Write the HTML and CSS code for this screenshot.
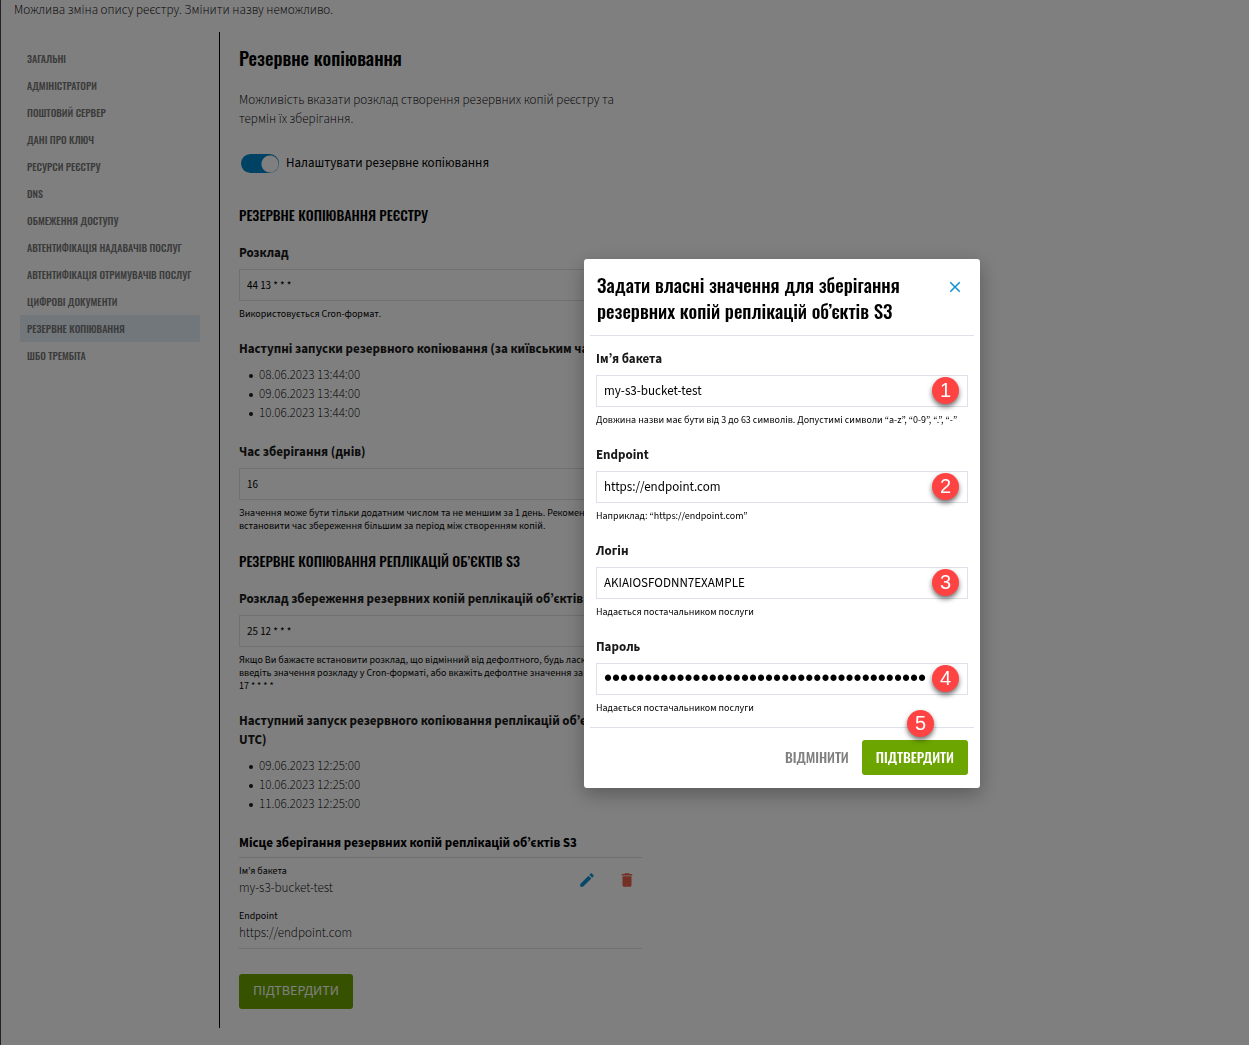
FILE: index.html
```
<!DOCTYPE html>
<html lang="uk">
<head>
<meta charset="utf-8">
<title>Резервне копіювання</title>
<link rel="stylesheet" href="styles.css">
</head>
<body>
<div class="page">
  <p class="intro">Можлива зміна опису реєстру. Змінити назву неможливо.</p>
  <div class="layout">
    <nav class="nav">
      <a href="#">Загальні</a>
      <a href="#">Адміністратори</a>
      <a href="#">Поштовий сервер</a>
      <a href="#">Дані про ключ</a>
      <a href="#">Ресурси реєстру</a>
      <a href="#">DNS</a>
      <a href="#">Обмеження доступу</a>
      <a href="#">Автентифікація надавачів послуг</a>
      <a href="#">Автентифікація отримувачів послуг</a>
      <a href="#">Цифрові документи</a>
      <a href="#" class="active" aria-current="page">Резервне копіювання</a>
      <a href="#">ШБО Трембіта</a>
    </nav>
    <main class="content">
      <h1>Резервне копіювання</h1>
      <p class="lead">Можливість вказати розклад створення резервних копій реєстру та термін їх зберігання.</p>
      <label class="toggle"><input type="checkbox" role="switch" checked><span>Налаштувати резервне копіювання</span></label>

      <section class="group">
        <h2>Резервне копіювання реєстру</h2>
        <div class="field">
          <label for="cron">Розклад</label>
          <input class="small" id="cron" type="text" value="44 13 * * *">
          <p class="hint">Використовується Cron-формат.</p>
        </div>
        <div class="runs">
          <h3>Наступні запуски резервного копіювання (за київським часом)</h3>
          <ul><li>08.06.2023 13:44:00</li><li>09.06.2023 13:44:00</li><li>10.06.2023 13:44:00</li></ul>
        </div>
        <div class="field">
          <label for="days">Час зберігання (днів)</label>
          <input class="small" id="days" type="text" value="16">
          <p class="hint">Значення може бути тільки додатним числом та не меншим за 1 день. Рекомендуємо встановити час збереження більшим за період між створенням копій.</p>
        </div>
      </section>

      <section class="group">
        <h2>Резервне копіювання реплікацій об’єктів S3</h2>
        <div class="field">
          <label for="cron-s3">Розклад збереження резервних копій реплікацій об’єктів S3</label>
          <input class="small" id="cron-s3" type="text" value="25 12 * * *">
          <p class="hint">Якщо Ви бажаєте встановити розклад, що відмінний від дефолтного, будь ласка,<br>введіть значення розкладу у Cron-форматі, або вкажіть дефолтне значення за UTC:<br>17 * * * *</p>
        </div>
        <div class="runs">
          <h3>Наступний запуск резервного копіювання реплікацій об’єктів (за<br>UTC)</h3>
          <ul><li>09.06.2023 12:25:00</li><li>10.06.2023 12:25:00</li><li>11.06.2023 12:25:00</li></ul>
        </div>
        <div class="storage">
          <h3>Місце зберігання резервних копій реплікацій об’єктів S3</h3>
          <div class="bucket">
            <dl>
              <dt>Ім’я бакета</dt><dd>my-s3-bucket-test</dd>
              <dt>Endpoint</dt><dd>https://endpoint.com</dd>
            </dl>
            <div class="actions">
              <button type="button" class="icon edit" aria-label="Редагувати"><svg viewBox="0 0 24 24"><path d="M3 17.25V21h3.75L17.81 9.94l-3.75-3.75L3 17.25zM20.71 7.04a1 1 0 0 0 0-1.41l-2.34-2.34a1 1 0 0 0-1.41 0l-1.83 1.83 3.75 3.75 1.83-1.83z"/></svg></button>
              <button type="button" class="icon delete" aria-label="Видалити"><svg viewBox="0 0 24 24"><path d="M6 19c0 1.1.9 2 2 2h8c1.1 0 2-.9 2-2V7H6v12zM19 4h-3.500l-1-1h-5l-1 1H5v2h14V4z"/></svg></button>
            </div>
          </div>
        </div>
      </section>
      <button type="button" class="submit">Підтвердити</button>
    </main>
  </div>
</div>

<div class="backdrop">
  <form class="modal" role="dialog" aria-labelledby="modal-title">
    <header class="modal-head">
      <h2 id="modal-title">Задати власні значення для зберігання резервних копій реплікацій об’єктів S3</h2>
      <button type="button" class="icon close" aria-label="Закрити"><svg viewBox="0 0 24 24"><path d="M19 6.410 17.590 5 12 10.590 6.410 5 5 6.410 10.590 12 5 17.590 6.410 19 12 13.410 17.590 19 19 17.590 13.410 12z"/></svg></button>
    </header>
    <div class="modal-body">
      <div class="field">
        <label for="bucket">Ім’я бакета</label>
        <div class="marked"><input id="bucket" type="text" value="my-s3-bucket-test"><span class="mark">1</span></div>
        <p class="hint">Довжина назви має бути від 3 до 63 символів. Допустимі символи “a-z”, “0-9”, “.”, “-”</p>
      </div>
      <div class="field">
        <label for="endpoint">Endpoint</label>
        <div class="marked"><input id="endpoint" type="text" value="https://endpoint.com"><span class="mark">2</span></div>
        <p class="hint">Наприклад: “https://endpoint.com”</p>
      </div>
      <div class="field">
        <label for="login">Логін</label>
        <div class="marked"><input id="login" type="text" value="AKIAIOSFODNN7EXAMPLE"><span class="mark">3</span></div>
        <p class="hint">Надається постачальником послуги</p>
      </div>
      <div class="field">
        <label for="password">Пароль</label>
        <div class="marked"><input id="password" type="password" value="wJalrXUtnFEMIK7MDENGbPxRfiCYEXAMPLEKEY12"><span class="mark">4</span></div>
        <p class="hint">Надається постачальником послуги</p>
      </div>
    </div>
    <footer class="modal-foot">
      <button type="button" class="cancel">Відмінити</button>
      <div class="marked"><button type="submit" class="confirm">Підтвердити</button><span class="mark above">5</span></div>
    </footer>
  </form>
</div>
</body>
</html>
```
FILE: styles.css
```
* { box-sizing: border-box; }

body {
  margin: 0;
  background: #fff;
  color: #000;
  font: 400 13px/19px "Source Sans Pro", "Source Sans 3", "Open Sans", "Noto Sans", sans-serif;
}

h1, h2, h3, p, ul, dl, dd { margin: 0; }
input, button { font: inherit; color: inherit; }
button { border: 0; padding: 0; background: none; cursor: pointer; }

.page {
  min-height: 100vh;
  border-left: 1px solid #444;
  padding-bottom: 17px;
}

.intro { padding: 1px 13px 12px; font-weight: 300; }
.layout { display: flex; }

.nav {
  width: 219px;
  flex: none;
  padding: 13px 19px;
  border-right: 1px solid #000;
  font: 500 10px/27px Oswald, "Roboto Condensed", sans-serif;
  text-transform: uppercase;
  white-space: nowrap;
}
.nav a {
  display: block;
  padding: 0 7px;
  color: #777;
  text-decoration: none;
}
.nav .active { background: #e2eef6; }

.content { width: 422px; padding: 10px 0 19px 19px; }

h1, h2 { font-family: Oswald, "Roboto Condensed", sans-serif; font-weight: 500; }
h1 { font-size: 19px; line-height: 30px; margin-bottom: 19px; }
.group h2 { font-size: 14px; line-height: 24px; margin-bottom: 17px; text-transform: uppercase; }
.lead { font-weight: 300; margin-bottom: 25px; }

.toggle { display: flex; align-items: center; gap: 7px; padding-left: 2px; margin-bottom: 30px; }
.toggle input {
  appearance: none;
  width: 38px;
  height: 19px;
  margin: 0;
  border-radius: 10px;
  background: radial-gradient(circle at 29px 10px, #fff 8px, #0085c7 9px);
}

.field > label, h3 {
  display: block;
  margin-bottom: 6px;
  font-size: 13px;
  font-weight: 700;
  line-height: 19px;
  color: #1a1a1a;
}
.field input {
  display: block;
  width: 100%;
  height: 32px;
  padding: 0 7px;
  border: 1px solid #e0e0ea;
  border-radius: 0;
  background: #fff;
  color: #000;
}
.field .small { font-size: 11px; }
.field input[type="password"] { font: 400 23px/30px "Liberation Sans", Arial, sans-serif; }
.hint { margin-top: 7px; font-size: 10px; line-height: 13px; }

.group { margin-bottom: 16px; }
.group .field { margin-bottom: 19px; }
.group .field:last-child { margin-bottom: 0; }
.runs { margin-bottom: 20px; }
.runs h3 { margin-bottom: 7px; }
.runs ul { padding-left: 10px; font-weight: 300; list-style: none; }
.runs li { display: flex; align-items: center; gap: 6px; }
.runs li::before {
  content: "";
  width: 4px;
  height: 4px;
  border-radius: 50%;
  background: #1a1a1a;
}

.storage h3 { margin-bottom: 4px; color: #000; }
.bucket {
  display: flex;
  justify-content: space-between;
  padding: 7px 6px 5px 0;
  border: solid #e0e0e0;
  border-width: 1px 0;
}
dt { font-size: 10px; line-height: 13px; }
dd { font-weight: 300; line-height: 20px; }
dd:first-of-type { margin-bottom: 12px; }
.actions { display: flex; align-items: flex-start; gap: 22px; padding-top: 6px; }
.icon { flex: none; width: 18px; height: 18px; }
.icon svg { display: block; width: 18px; height: 18px; fill: currentColor; }
.edit, .close { color: #0e90d2; }
.delete { color: #e8604a; }

.submit, .confirm {
  height: 35px;
  padding: 0 14px;
  border-radius: 3px;
  background: #6ca400;
  color: #fff;
  text-transform: uppercase;
}
.submit { display: block; margin-top: 25px; font-size: 14px; }

.backdrop {
  position: fixed;
  inset: 0;
  display: flex;
  align-items: center;
  justify-content: center;
  padding: 1px 0 0 315px;
  background: rgba(0, 0, 0, .5);
}
.modal {
  width: 396px;
  padding: 12px 6px 13px;
  border-radius: 3px;
  background: #fff;
  box-shadow: 0 6px 20px rgba(0, 0, 0, .3);
}
.modal-head {
  display: flex;
  justify-content: space-between;
  gap: 40px;
  padding: 0 10px 12px 7px;
  border-bottom: 1px solid #e0e0ea;
}
.modal-head h2 { font-size: 19px; line-height: 26px; }
.close { margin-top: 7px; }
.modal-body {
  display: grid;
  gap: 19px;
  padding: 14px 6px 12px;
}
.modal-foot {
  display: flex;
  justify-content: flex-end;
  gap: 13px;
  padding: 12px 6px 0;
  border-top: 1px solid #e0e0ea;
  font: 500 14px/20px Oswald, "Roboto Condensed", sans-serif;
}
.cancel { color: #808080; text-transform: uppercase; }

.marked { position: relative; }
.mark {
  position: absolute;
  top: 2px;
  right: 9px;
  width: 27px;
  height: 27px;
  border-radius: 50%;
  background: #ff4242;
  box-shadow: 0 3px 5px rgba(0, 0, 0, .55);
  color: #fff;
  font: 400 20px/27px "Liberation Sans", Arial, sans-serif;
  text-align: center;
}
.mark.above { top: -30px; right: 34px; }
```
